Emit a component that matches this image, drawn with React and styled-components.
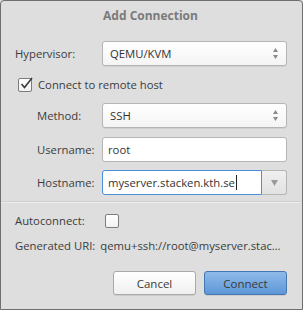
import React from 'react';
import styled, { createGlobalStyle } from 'styled-components';

const GlobalStyle = createGlobalStyle`
  html, body {
    margin: 0;
    padding: 0;
    background: #dedede;
  }
  body {
    font-family: "Open Sans", "Noto Sans", sans-serif;
    font-size: 11.3px;
    color: #3c3c3c;
  }
`;

const Dialog = styled.div`
  box-sizing: border-box;
  width: 303px;
  height: 310px;
  border: 1px solid #6f6f6f;
  border-radius: 4px 4px 0 0;
  background: #dedede;
  display: flex;
  flex-direction: column;
  padding: 0 15px 0 14px;
`;

const Title = styled.div`
  height: 28px;
  display: flex;
  align-items: center;
  justify-content: center;
  font-weight: bold;
  font-size: 12px;
  color: #7a7a7a;
  margin-left: -1px;
`;

const Row = styled.div`
  display: flex;
  align-items: center;
  height: 25px;
  margin-top: ${(p) => p.$top}px;
  padding-left: ${(p) => (p.$indent ? 22 : 0)}px;
`;

const Label = styled.div`
  min-width: ${(p) => (p.$indent ? 65 : 87)}px;
  flex: none;
  white-space: nowrap;
`;

const UriLabel = styled.div`
  flex: none;
  white-space: nowrap;
  margin-right: 5px;
`;

const Select = styled.div`
  flex: 1;
  box-sizing: border-box;
  height: 25px;
  display: flex;
  align-items: center;
  justify-content: space-between;
  padding: 0 7px 0 7px;
  border: 1px solid #b5b5b5;
  border-radius: 3px;
  background: linear-gradient(#ffffff, #f4f4f4);
  box-shadow: 0 1px 0 rgba(0, 0, 0, 0.06);
  color: #333;
`;

const Arrows = styled.svg`
  width: 7px;
  height: 13px;
  flex: none;
`;

const Input = styled.div`
  flex: 1;
  box-sizing: border-box;
  height: 25px;
  display: flex;
  align-items: center;
  padding: 0 5px;
  border: 1px solid ${(p) => (p.$focus ? '#4a90d9' : '#b5b5b5')};
  border-radius: ${(p) => (p.$joined ? '3px 0 0 3px' : '3px')};
  background: #fff;
  color: #333;
`;

const Caret = styled.span`
  display: inline-block;
  width: 1px;
  height: 15px;
  background: #222;
  margin-left: 1px;
`;

const ComboButton = styled.div`
  width: 25px;
  height: 25px;
  box-sizing: border-box;
  flex: none;
  display: flex;
  align-items: center;
  justify-content: center;
  border: 1px solid #b5b5b5;
  border-left: none;
  border-radius: 0 3px 3px 0;
  background: linear-gradient(#f0f0f0, #e2e2e2);
`;

const Check = styled.div`
  box-sizing: border-box;
  width: 14px;
  height: 14px;
  border: 1px solid #7c7c7c;
  border-radius: 2px;
  background: linear-gradient(#ffffff, #f2f2f2);
  flex: none;
  position: relative;
  margin: ${(p) => p.$margin || '0'};
`;

const CheckMark = styled.svg`
  position: absolute;
  left: 0;
  top: -3px;
  width: 15px;
  height: 15px;
`;

const Separator = styled.div`
  height: 1px;
  margin: 6px -14px 0 -14px;
  background: #d0d0d0;
  border-bottom: 1px solid #ececec;
`;

const Value = styled.div`
  flex: 1;
  min-width: 0;
  white-space: nowrap;
`;

const Buttons = styled.div`
  display: flex;
  justify-content: flex-end;
  gap: 8px;
  margin-top: 13px;
`;

const Button = styled.button`
  width: 83px;
  height: 24px;
  font-family: inherit;
  font-size: 11.5px;
  color: #3a3a3a;
  border-radius: 3px;
  border: 1px solid ${(p) => (p.$primary ? '#4577b3' : '#a9a9a9')};
  background: ${(p) =>
    p.$primary
      ? 'linear-gradient(#8fbaea, #5d97d7)'
      : 'linear-gradient(#ffffff, #f0f0f0)'};
  box-shadow: 0 1px 0 rgba(0, 0, 0, 0.08);
  padding: 0;
`;

const UpDown = () => (
  <Arrows viewBox="0 0 7 13">
    <path d="M3.5 1 L6 5 L1 5 Z" fill="#8a8a8a" />
    <path d="M1 8 L6 8 L3.5 12 Z" fill="#8a8a8a" />
  </Arrows>
);

const App = () => (
  <>
    <GlobalStyle />
    <Dialog>
      <Title>Add Connection</Title>
      <Row $top={12}>
        <Label>Hypervisor:</Label>
        <Select>
          QEMU/KVM
          <UpDown />
        </Select>
      </Row>
      <Row $top={6}>
        <Check $margin="0 6px 0 3px">
          <CheckMark viewBox="0 0 15 15">
            <path
              d="M2.5 8 L5.5 11.5 L13 2"
              fill="none"
              stroke="#3a3a3a"
              strokeWidth="1.6"
            />
          </CheckMark>
        </Check>
        Connect to remote host
      </Row>
      <Row $top={6} $indent>
        <Label $indent>Method:</Label>
        <Select>
          SSH
          <UpDown />
        </Select>
      </Row>
      <Row $top={9} $indent>
        <Label $indent>Username:</Label>
        <Input>root</Input>
      </Row>
      <Row $top={8} $indent>
        <Label $indent>Hostname:</Label>
        <Input $focus $joined>
          myserver.stacken.kth.se
          <Caret />
        </Input>
        <ComboButton>
          <svg width="7" height="6" viewBox="0 0 7 6">
            <path d="M0 0 L7 0 L3.5 6 Z" fill="#9a9a9a" />
          </svg>
        </ComboButton>
      </Row>
      <Separator />
      <Row $top={5}>
        <Label>Autoconnect:</Label>
        <Check $margin="0 0 0 3px" />
      </Row>
      <Row $top={0}>
        <UriLabel>Generated URI:</UriLabel>
        <Value>qemu+ssh://root@myserver.stac…</Value>
      </Row>
      <Buttons>
        <Button>Cancel</Button>
        <Button $primary>Connect</Button>
      </Buttons>
    </Dialog>
  </>
);

export default App;
